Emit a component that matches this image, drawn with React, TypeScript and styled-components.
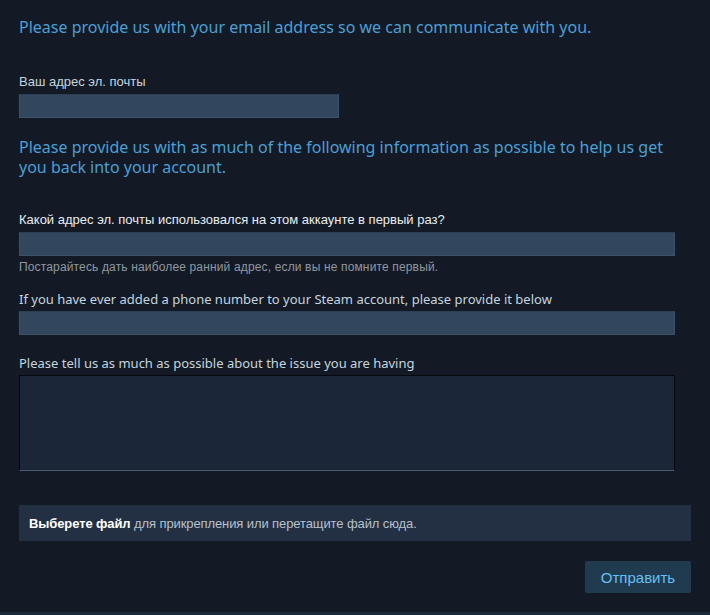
import React from "react";
import styled, { createGlobalStyle } from "styled-components";

const Global = createGlobalStyle`
  html, body { margin: 0; padding: 0; background: #131a25; }
  body { font-family: "Liberation Sans", Arial, sans-serif; }
  * { box-sizing: border-box; }
`;

const Page = styled.div`
  width: 710px;
  height: 615px;
  background: #131a25;
  display: flex;
  flex-direction: column;
  border-bottom: 3px solid #1b2a3a;
`;

const Content = styled.div`
  flex: 1;
  padding: 17px 19px 0 19px;
  display: flex;
  flex-direction: column;
`;

const Intro = styled.p<{ $mt?: number }>`
  margin: ${(p) => p.$mt ?? 0}px 0 0 0;
  color: #4b9fd5;
  font-family: "Noto Sans", "Liberation Sans", sans-serif;
  font-size: 16px;
  line-height: 20px;
  padding-right: 20px;
`;

const Field = styled.div<{ $mt: number }>`
  margin-top: ${(p) => p.$mt}px;
  display: flex;
  flex-direction: column;
`;

const Label = styled.label<{ $latin?: boolean; $bold?: boolean }>`
  color: ${(p) => (p.$bold ? "#e8edf1" : "#c6d4df")};
  font-family: ${(p) =>
    p.$latin ? `"Noto Sans", "Liberation Sans", sans-serif` : `"Liberation Sans", Arial, sans-serif`};
  font-size: 13px;
  line-height: 14px;
  margin-bottom: 5px;
`;

const Input = styled.input<{ $w: number }>`
  width: ${(p) => p.$w}px;
  height: 24px;
  background: #32465e;
  border: 1px solid #3b526b;
  border-top-color: #2c3f55;
  outline: none;
  color: #fff;
  padding: 0 6px;
`;

const Hint = styled.div`
  color: #8f98a0;
  font-size: 12px;
  line-height: 13px;
  letter-spacing: 0.15px;
  margin-top: 5px;
`;

const TextArea = styled.textarea`
  width: 656px;
  height: 96px;
  background: #1b2638;
  border: 1px solid #05080c;
  border-bottom: 1px solid #4a5a6e;
  resize: none;
  outline: none;
  color: #fff;
`;

const DropZone = styled.div`
  margin-top: 34px;
  height: 36px;
  background: #233043;
  display: flex;
  align-items: center;
  padding: 0 10px;
  font-size: 13px;
  letter-spacing: -0.1px;
  color: #b6c1cb;
`;

const Strong = styled.span`
  color: #ffffff;
  font-weight: bold;
`;

const Actions = styled.div`
  margin-top: 20px;
  display: flex;
  justify-content: flex-end;
`;

const SubmitButton = styled.button`
  width: 106px;
  height: 32px;
  background: #203b50;
  border: none;
  border-radius: 2px;
  color: #66c0f4;
  font-family: "Liberation Sans", Arial, sans-serif;
  font-size: 15px;
  cursor: pointer;
`;

export default function App() {
  return (
    <>
      <Global />
      <Page>
        <Content>
          <Intro>Please provide us with your email address so we can communicate with you.</Intro>
          <Field $mt={38}>
            <Label>Ваш адрес эл. почты</Label>
            <Input $w={320} />
          </Field>
          <Intro $mt={19}>
            Please provide us with as much of the following information as possible to help us get you back into your account.
          </Intro>
          <Field $mt={36}>
            <Label $bold>Какой адрес эл. почты использовался на этом аккаунте в первый раз?</Label>
            <Input $w={656} />
            <Hint>Постарайтесь дать наиболее ранний адрес, если вы не помните первый.</Hint>
          </Field>
          <Field $mt={18}>
            <Label $latin>If you have ever added a phone number to your Steam account, please provide it below</Label>
            <Input $w={656} />
          </Field>
          <Field $mt={21}>
            <Label $latin>Please tell us as much as possible about the issue you are having</Label>
            <TextArea />
          </Field>
          <DropZone>
            <Strong>Выберете файл</Strong>&nbsp;для прикрепления или перетащите файл сюда.
          </DropZone>
          <Actions>
            <SubmitButton>Отправить</SubmitButton>
          </Actions>
        </Content>
      </Page>
    </>
  );
}
